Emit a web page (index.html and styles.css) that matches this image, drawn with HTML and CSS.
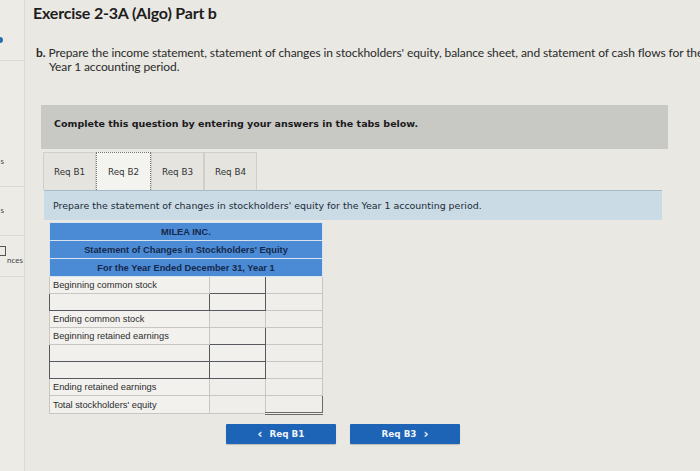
FILE: index.html
```html
<!DOCTYPE html>
<html>
<head>
<meta charset="utf-8">
<link rel="stylesheet" href="styles.css">
</head>
<body>
<div class="page">
  <aside class="side">
    <div class="side-item side-top"><span class="dot"></span></div>
    <div class="side-item side-a"><span class="side-txt">s</span></div>
    <div class="side-item side-b"><span class="side-txt">s</span></div>
    <div class="side-item side-c"><span class="side-box"></span><span class="side-txt">nces</span></div>
    <div class="side-rest"></div>
  </aside>
  <main class="main">
    <h1 class="title">Exercise 2-3A (Algo) Part b</h1>
    <p class="prompt"><b>b.</b> Prepare the income statement, statement of changes in stockholders' equity, balance sheet, and statement of cash flows for the<br><span class="indent">Year 1 accounting period.</span></p>
    <div class="notice">Complete this question by entering your answers in the tabs below.</div>
    <div class="tabs">
      <div class="tab">Req B1</div>
      <div class="tab active">Req B2</div>
      <div class="tab">Req B3</div>
      <div class="tab">Req B4</div>
    </div>
    <div class="instr">Prepare the statement of changes in stockholders' equity for the Year 1 accounting period.</div>
    <table class="stmt">
      <tr class="hd"><th colspan="3">MILEA INC.</th></tr>
      <tr class="hd"><th colspan="3">Statement of Changes in Stockholders' Equity</th></tr>
      <tr class="hd"><th colspan="3">For the Year Ended December 31, Year 1</th></tr>
      <tr><td class="lbl">Beginning common stock</td><td class="amt inp"></td><td class="tot"></td></tr>
      <tr><td class="lbl inp"></td><td class="amt inp"></td><td class="tot"></td></tr>
      <tr><td class="lbl">Ending common stock</td><td class="amt"></td><td class="tot"></td></tr>
      <tr><td class="lbl">Beginning retained earnings</td><td class="amt inp"></td><td class="tot"></td></tr>
      <tr><td class="lbl inp"></td><td class="amt inp"></td><td class="tot"></td></tr>
      <tr><td class="lbl inp"></td><td class="amt inp"></td><td class="tot"></td></tr>
      <tr><td class="lbl">Ending retained earnings</td><td class="amt"></td><td class="tot"></td></tr>
      <tr><td class="lbl">Total stockholders' equity</td><td class="amt"></td><td class="tot last"></td></tr>
    </table>
    <div class="nav">
      <button class="btn"><span class="chev">&lsaquo;</span> Req B1</button>
      <button class="btn">Req B3 <span class="chev">&rsaquo;</span></button>
    </div>
  </main>
</div>
</body>
</html>
```

FILE: styles.css
```css
html, body {
  margin: 0;
  padding: 0;
  background: #e9e8e3;
  overflow: hidden;
}
.page {
  display: flex;
  width: 700px;
  height: 471px;
  overflow: hidden;
  font-family: "Lato", "Open Sans", sans-serif;
  color: #222;
}
.side {
  width: 24px;
  flex: none;
  display: flex;
  flex-direction: column;
  border-right: 1px solid #dad9d4;
  background: #ecebe6;
}
.side-item {
  position: relative;
  border-bottom: 1px solid #dad9d4;
  font-size: 8px;
  color: #444;
}
.side-top { height: 60px; }
.side-a { height: 125px; }
.side-b { height: 48px; }
.side-c { height: 40px; }
.dot {
  position: absolute;
  left: -3px;
  top: 37px;
  width: 6px;
  height: 6px;
  border-radius: 50%;
  background: #2b6cb0;
}
.side-txt {
  position: absolute;
  right: 18px;
  bottom: 22px;
}
.side-a .side-txt { bottom: 20px; right: 20px; }
.side-b .side-txt { bottom: 20px; right: 20px; }
.side-c .side-txt { right: 1px; bottom: 11px; }
.side-box {
  position: absolute;
  right: 18px;
  top: 10px;
  width: 5px;
  height: 8px;
  border: 1px solid #555;
  border-left: none;
}
.main {
  flex: 1;
  min-width: 0;
  padding-left: 8px;
}
.title {
  margin: 3px 0 0 0;
  font-size: 16px;
  font-weight: 700;
  color: #1d1d1d;
  letter-spacing: -0.2px;
  line-height: 20px;
}
.prompt {
  margin: 23px 0 0 3px;
  font-size: 12px;
  line-height: 14px;
  color: #2a2a2a;
  white-space: nowrap;
  letter-spacing: -0.1px;
}
.indent { padding-left: 13px; }
.notice {
  margin: 31px 0 0 8px;
  width: 627px;
  height: 44px;
  box-sizing: border-box;
  background: #c8c8c5;
  padding: 13px 0 0 13px;
  font-family: "DejaVu Sans", Verdana, sans-serif;
  font-size: 9.5px;
  font-weight: 700;
  color: #1a1a1a;
}
.tabs {
  display: flex;
  margin: 3px 0 0 10px;
  height: 38px;
}
.tab {
  width: 53px;
  height: 38px;
  box-sizing: border-box;
  border: 1px solid #d0cfca;
  border-bottom: none;
  background: #e5e4df;
  display: flex;
  align-items: center;
  justify-content: center;
  font-family: "DejaVu Sans", Verdana, sans-serif;
  font-size: 8.8px;
  color: #333;
}
.tab.active {
  width: 55px;
  background: #f3f3f0;
  border: 1px dotted #777;
  border-bottom: none;
}
.instr {
  margin: 0 0 0 11px;
  width: 618px;
  height: 30px;
  box-sizing: border-box;
  background: #cadbe5;
  border-top: 1px solid #a9b9c4;
  padding: 9px 0 0 9px;
  font-family: "DejaVu Sans", Verdana, sans-serif;
  font-size: 9.45px;
  color: #1c2a38;
}
.stmt {
  margin: 2px 0 0 16px;
  border-collapse: collapse;
  width: 274px;
  font-family: "Liberation Sans", Arial, sans-serif;
}
.stmt .hd th {
  background: #4b8bd6;
  border: 1px solid #d7e4f0;
  height: 17px;
  padding: 0;
  font-size: 9.3px;
  font-weight: 700;
  color: #15284a;
  text-align: center;
}
.stmt td {
  height: 16px;
  padding: 0;
  border: 1px solid #c7c6c1;
  background: #efeeea;
}
.stmt .lbl {
  width: 156px;
  padding-left: 3px;
  font-size: 9.3px;
  color: #2d2d2d;
  background: #f2f1ed;
  white-space: nowrap;
}
.stmt .amt { width: 56px; }
.stmt .tot { width: 56px; }
.stmt .inp {
  border: 1.5px solid #56595e;
  background: #f1f0ec;
}
.stmt .last {
  border: 1.5px solid #6a6a6a;
  border-bottom: 3px double #6a6a6a;
}
.nav {
  display: flex;
  gap: 14px;
  margin: 9px 0 0 193px;
}
.btn {
  width: 110px;
  height: 20px;
  border: none;
  border-radius: 1px;
  background: #1d63b6;
  color: #eef3fa;
  font-family: "DejaVu Sans", Verdana, sans-serif;
  font-size: 8.8px;
  font-weight: 700;
  padding: 0;
  display: flex;
  align-items: center;
  justify-content: center;
  gap: 7px;
  box-shadow: 0 1px 1px rgba(0,0,0,0.2);
}
.chev {
  font-size: 12px;
  line-height: 10px;
}
```
